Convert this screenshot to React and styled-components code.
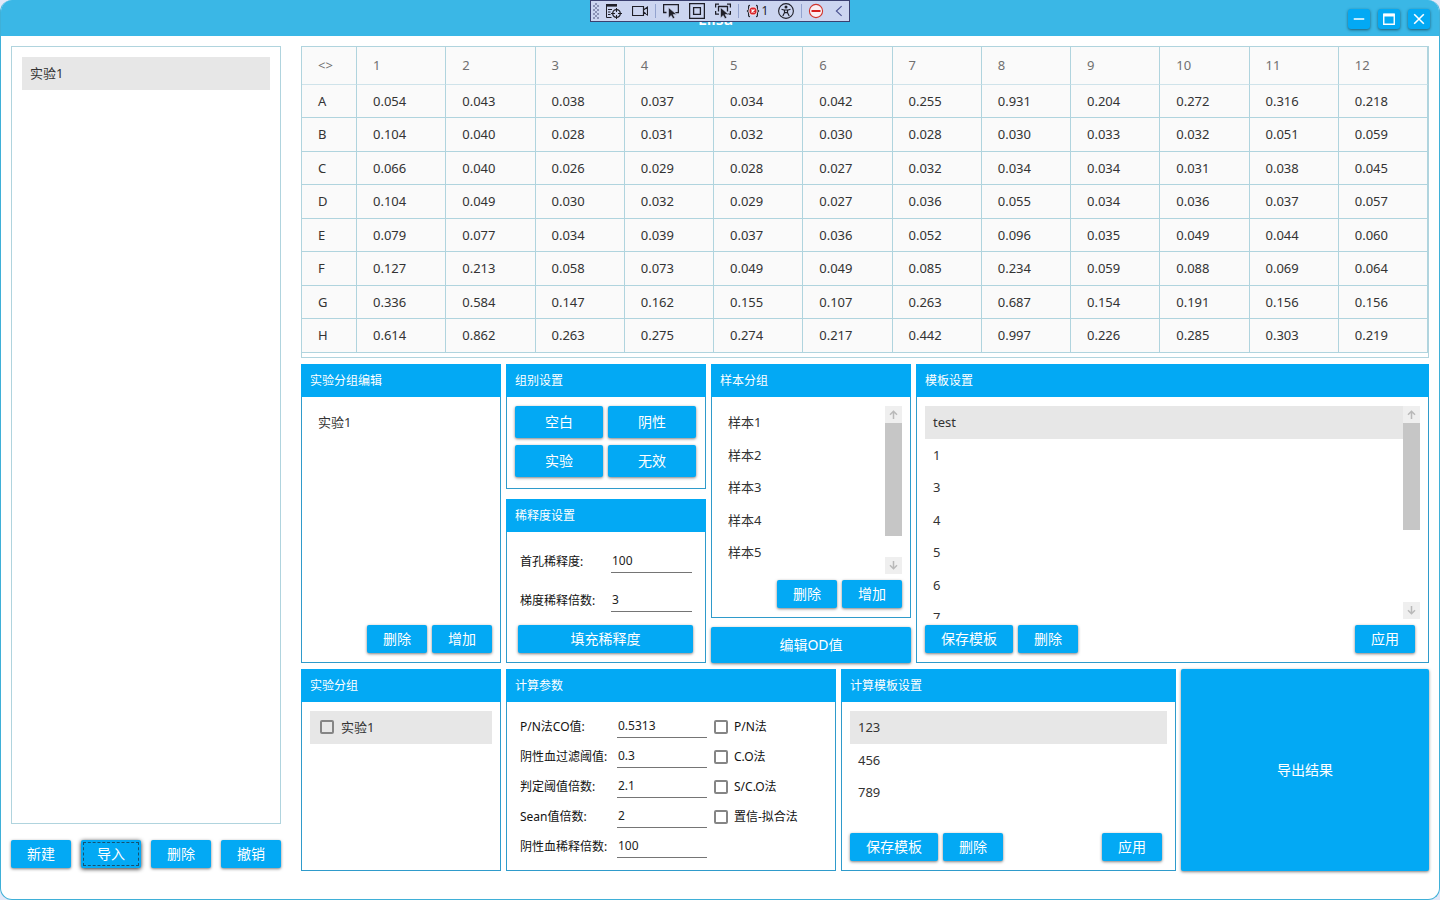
import React from "react";
import styled, { createGlobalStyle, css } from "styled-components";

const GlobalStyle = createGlobalStyle`
  *, *::before, *::after {
    box-sizing: border-box;
  }
  body {
    margin: 0;
    background: #e3e8f8;
    color: #333;
    font: 13px/20px "Noto Sans", "Noto Sans CJK SC", sans-serif;
  }
  button, input {
    font-family: inherit;
  }
  ul {
    list-style: none;
    margin: 0;
    padding: 0;
  }
`;

const AppWindow = styled.div`
  position: relative;
  display: flex;
  flex-direction: column;
  min-height: 100vh;
  background: #fff;
  border: 1px solid #3fb0d8;
  border-top: 0;
  border-radius: 12px;
  overflow: hidden;
`;

const TitleBar = styled.header`
  display: grid;
  grid-template-columns: 1fr auto 1fr;
  align-items: center;
  height: 36px;
  padding: 1px 9px 0 0;
  background: #3ab7e6;
`;

const Title = styled.h1`
  grid-column: 2;
  margin: 0;
  color: #fff;
  font-size: 16px;
  line-height: 20px;
  font-weight: 600;
`;

const WindowControls = styled.div`
  grid-column: 3;
  display: flex;
  justify-content: flex-end;
  gap: 8px;
`;

const raised = css`
  border: 0;
  border-radius: 2px;
  background: #03a9f4;
  color: #fff;
  box-shadow: 0 1px 3px rgba(0, 0, 0, 0.5);
  cursor: pointer;
`;

const ControlButton = styled.button`
  ${raised}
  display: flex;
  align-items: center;
  justify-content: center;
  width: 22px;
  height: 20px;
  padding: 0;
  border-radius: 3px;
`;

const Button = styled.button`
  ${raised}
  height: ${(p) => (p.$tall ? "36px" : "28px")};
  min-width: 60px;
  padding: 0 16px;
  font-size: 14px;
  line-height: 20px;
  white-space: nowrap;
  ${(p) =>
    p.$focused &&
    css`
      outline: 1px dashed #16506e;
      outline-offset: -3px;
      box-shadow: 0 1px 4px rgba(0, 0, 0, 0.85);
    `}
`;

const ExportButton = styled(Button)`
  height: auto;
`;

const DebugBar = styled.div`
  position: absolute;
  top: 0;
  left: 50%;
  transform: translateX(-50%);
  display: flex;
  align-items: center;
  height: 22px;
  width: 260px;
  background: #ccd5f0;
  border: 1px solid #3b4070;
`;

const Grip = styled.span`
  flex: none;
  width: 6px;
  height: 16px;
  margin: 0 2px;
  background: conic-gradient(#5f668f 90deg, transparent 0) 0 0 / 4px 4px,
    conic-gradient(#5f668f 90deg, transparent 0) 2px 2px / 4px 4px;
  opacity: 0.6;
`;

const DebugButton = styled.button`
  display: flex;
  align-items: center;
  justify-content: center;
  flex: none;
  gap: 2px;
  width: ${(p) => p.$width || 26}px;
  height: 20px;
  padding: 0;
  border: 0;
  background: none;
  color: #1f1f28;
  font-size: 12px;
  line-height: 16px;
`;

const DebugDivider = styled.span`
  flex: none;
  width: 1px;
  height: 14px;
  margin: 0 2px;
  background: #93a3cf;
`;

const Body = styled.div`
  flex: 1;
  display: grid;
  grid-template-columns: 270px minmax(0, 1fr);
  gap: 20px;
  padding: 10px 10px 28px;
`;

const Sidebar = styled.aside`
  display: flex;
  flex-direction: column;
  gap: 16px;
  padding-bottom: 3px;
`;

const ExperimentList = styled.ul`
  flex: 1;
  && {
    padding: 10px;
  }
  border: 1px solid #b0d4de;
`;

const Item = styled.li`
  display: flex;
  align-items: center;
  height: 33px;
  padding: 0 0 2px 8px;
  background: ${(p) => (p.$selected ? "#e7e7e7" : "transparent")};
  &:nth-child(odd):not(:first-child) {
    height: 32px;
  }
`;

const Spread = styled.div`
  display: flex;
  justify-content: space-between;
`;

const Main = styled.main`
  display: grid;
  grid-template-columns: minmax(0, 1fr);
  grid-template-rows: auto 1fr 202px;
  gap: 6px;
`;

const PlateFrame = styled.div`
  padding-bottom: 4px;
  border: 1px solid #b0d4de;
`;

const Plate = styled.table`
  width: 100%;
  table-layout: fixed;
  border-collapse: separate;
  border-spacing: 0;
  background: #fafafa;
  th,
  td {
    padding: 0 0 1px 16px;
    border-right: 1px solid #b0d4de;
    border-bottom: 1px solid #b0d4de;
    text-align: left;
    font-weight: 400;
  }
  thead th {
    height: 38px;
    color: #707070;
    border-bottom-color: #cfe3ea;
  }
  th:first-child {
    width: 55px;
  }
  tbody tr {
    height: 33px;
  }
  tbody tr:nth-child(even) {
    height: 34px;
  }
`;

const PanelRow = styled.div`
  display: grid;
  grid-template-columns: ${(p) => p.$columns};
  gap: 5px;
`;

const Stack = styled.div`
  display: flex;
  flex-direction: column;
  gap: ${(p) => p.$gap}px;
`;

const PanelBox = styled.section`
  display: flex;
  flex-direction: column;
  flex: ${(p) => (p.$grow ? "1" : "none")};
  border: 1px solid #2f9bcb;
`;

const PanelTitle = styled.h2`
  height: 33px;
  margin: -1px -1px 0;
  padding-left: 9px;
  background: #03a9f4;
  color: #fff;
  font-size: 12px;
  line-height: 34px;
  font-weight: 400;
`;

const PanelBody = styled.div`
  flex: 1;
  display: flex;
  flex-direction: column;
  gap: 6px;
  padding: 9px 8px;
`;

const ListArea = styled.div`
  flex: 1 1 0;
  min-height: 0;
  display: flex;
  overflow: hidden;
`;

const List = styled.ul`
  flex: 1;
`;

const Track = styled.div`
  display: flex;
  flex-direction: column;
  width: 17px;
`;

const TrackEnd = styled.div`
  display: flex;
  align-items: center;
  justify-content: center;
  flex: none;
  height: 17px;
  background: #efefef;
`;

const TrackMiddle = styled.div`
  flex: 1;
`;

const Thumb = styled.div`
  height: ${(p) => p.$size};
  background: #c6c6c6;
`;

const Actions = styled.div`
  display: flex;
  gap: 5px;
  justify-content: flex-end;
`;

const SplitActions = styled(Actions)`
  padding-right: 5px;
  ${Button}:last-child {
    margin-left: auto;
  }
`;

const KindGrid = styled.div`
  display: grid;
  grid-template-columns: 88px 88px;
  grid-auto-rows: 32px;
  gap: 7px 5px;
  ${Button} {
    height: 32px;
  }
`;

const DilutionForm = styled.div`
  display: grid;
  grid-template-columns: 91px 81px;
  gap: 15px 0;
  padding: 8px 5px 7px;
`;

const DilutionAction = styled.div`
  display: grid;
  padding: 0 4px 0 3px;
`;

const ParamForm = styled.div`
  display: grid;
  grid-template-columns: 97px 90px 1fr;
  grid-auto-rows: 30px;
  align-items: center;
  padding: 0 5px;
`;

const Label = styled.label`
  padding-top: 2px;
  color: #111;
  font-size: 12px;
  line-height: 22px;
  white-space: nowrap;
`;

const TextInput = styled.input`
  width: 100%;
  height: 24px;
  padding: 0 1px;
  border: 0;
  border-bottom: 1px solid #757575;
  border-radius: 0;
  background: none;
  color: #222;
  font-size: 12px;
  outline: none;
`;

const Check = styled.label`
  grid-column: 3;
  display: flex;
  align-items: center;
  gap: 6px;
  padding: 2px 0 0 7px;
  color: #111;
  font-size: 12px;
`;

const ItemCheck = styled.label`
  display: flex;
  align-items: center;
  gap: 7px;
  padding-left: 2px;
`;

const CheckBox = styled.input`
  appearance: none;
  width: 14px;
  height: 14px;
  margin: 0;
  border: 2px solid #858585;
  border-radius: 2px;
`;

const wells = [
  ["A", "0.054", "0.043", "0.038", "0.037", "0.034", "0.042", "0.255", "0.931", "0.204", "0.272", "0.316", "0.218"],
  ["B", "0.104", "0.040", "0.028", "0.031", "0.032", "0.030", "0.028", "0.030", "0.033", "0.032", "0.051", "0.059"],
  ["C", "0.066", "0.040", "0.026", "0.029", "0.028", "0.027", "0.032", "0.034", "0.034", "0.031", "0.038", "0.045"],
  ["D", "0.104", "0.049", "0.030", "0.032", "0.029", "0.027", "0.036", "0.055", "0.034", "0.036", "0.037", "0.057"],
  ["E", "0.079", "0.077", "0.034", "0.039", "0.037", "0.036", "0.052", "0.096", "0.035", "0.049", "0.044", "0.060"],
  ["F", "0.127", "0.213", "0.058", "0.073", "0.049", "0.049", "0.085", "0.234", "0.059", "0.088", "0.069", "0.064"],
  ["G", "0.336", "0.584", "0.147", "0.162", "0.155", "0.107", "0.263", "0.687", "0.154", "0.191", "0.156", "0.156"],
  ["H", "0.614", "0.862", "0.263", "0.275", "0.274", "0.217", "0.442", "0.997", "0.226", "0.285", "0.303", "0.219"],
];

const params = [
  { id: "pn", label: "P/N法CO值:", value: "0.5313", method: "P/N法" },
  { id: "filter", label: "阴性血过滤阈值:", value: "0.3", method: "C.O法" },
  { id: "judge", label: "判定阈值倍数:", value: "2.1", method: "S/C.O法" },
  { id: "sean", label: "Sean值倍数:", value: "2", method: "置信-拟合法" },
  { id: "negative", label: "阴性血稀释倍数:", value: "100" },
];

const Icon = ({ children, size = 16 }) => (
  <svg width={size} height={size} viewBox="0 0 16 16" fill="none" stroke="currentColor" aria-hidden="true">
    {children}
  </svg>
);

const Pointer = () => (
  <path d="M5.5 4.5v10.5l2.7-2.5 1.8 3.3 1.8-1-1.7-3.2h3.6z" fill="currentColor" stroke="#ccd5f0" strokeWidth="0.6" />
);

const DebugToolbar = () => (
  <DebugBar role="toolbar" aria-label="Debug">
    <Grip />
    <DebugButton aria-label="Live Visual Tree">
      <Icon>
        <path d="M0 1h11v2.6H0z" fill="currentColor" stroke="none" />
        <path d="M.5 3v11.5h5M2 6.5h4M2 9h2.5M2 11.5h2.5M10.5 5v4M10.5 12v4M5 10.5h4M12 10.5h4" />
        <circle cx="10.5" cy="10.5" r="3.8" strokeWidth="1.3" />
      </Icon>
    </DebugButton>
    <DebugButton aria-label="Record">
      <Icon>
        <path d="M.5 3.5h11v9H.5zM11.500 7l4-3v8l-4-3" strokeWidth="1.2" />
      </Icon>
    </DebugButton>
    <DebugDivider />
    <DebugButton aria-label="Select Element">
      <Icon>
        <path d="M3.5 9.5H.6V1.6h14.800v8h-3" strokeWidth="1.3" />
        <Pointer />
      </Icon>
    </DebugButton>
    <DebugButton aria-label="Layout Adorners">
      <Icon>
        <path d="M.6.6h14.800v14.800H.6zM4.600 4.600h6.800v6.800H4.600z" strokeWidth="1.3" />
      </Icon>
    </DebugButton>
    <DebugButton aria-label="Track Focused Element">
      <Icon>
        <path d="M.6 4.500V1.200H4M12 1.200h3.400v3.300M.6 8v3.200H4M12 11.200h3.400V8M3.500 8.500v-5h9v5" strokeWidth="1.3" />
        <Pointer />
      </Icon>
    </DebugButton>
    <DebugDivider />
    <DebugButton $width={32} aria-label="Binding Failures 1">
      <Icon size={14}>
        <path
          d="M4.500 1.500C2.500 1.500 3 3 3 5s-.5 3-2 3c1.500 0 2 1 2 3s-.5 3.500 1.500 3.500M11.500 1.500C13.500 1.500 13 3 13 5s.5 3 2 3c-1.500 0-2 1-2 3s.5 3.500-1.500 3.500"
          strokeWidth="1.3"
        />
        <circle cx="8" cy="8" r="4.600" fill="#d8232a" stroke="#fbeff2" />
        <path d="M6.300 6.300l3.400 3.400M9.700 6.300l-3.400 3.400" stroke="#fff" strokeWidth="1.5" />
      </Icon>
      1
    </DebugButton>
    <DebugButton aria-label="Accessibility Checker">
      <Icon>
        <circle cx="8" cy="8" r="7.400" strokeWidth="1.1" />
        <circle cx="8" cy="4" r="1.500" fill="currentColor" stroke="none" />
        <path d="M3.500 6.200l3 .9v2.600L4.800 13M12.500 6.200l-3 .9v2.600l1.700 3.300M6.500 7h3M6.500 9.700h3" strokeWidth="1.2" />
      </Icon>
    </DebugButton>
    <DebugDivider />
    <DebugButton $width={24} aria-label="Stop">
      <Icon>
        <circle cx="8" cy="8" r="6.600" fill="#fbeff2" stroke="#d0342c" strokeWidth="1.1" />
        <path d="M3.500 8h9" stroke="#d8201f" strokeWidth="2" />
      </Icon>
    </DebugButton>
    <DebugButton $width={21} aria-label="Collapse">
      <Icon size={14}>
        <path d="M11 2.500L5 8l6 5.500" stroke="#4a5190" strokeWidth="1.3" />
      </Icon>
    </DebugButton>
  </DebugBar>
);

const ScrollTrack = ({ thumb }) => (
  <Track aria-hidden="true">
    <TrackEnd>
      <svg width="9" height="9" viewBox="0 0 9 9" fill="none" stroke="#b9b9b9" strokeWidth="1.5">
        <path d="M4.500 9V1.200M1 4.700l3.500-3.500L8 4.700" />
      </svg>
    </TrackEnd>
    <TrackMiddle>
      <Thumb $size={thumb} />
    </TrackMiddle>
    <TrackEnd>
      <svg width="9" height="9" viewBox="0 0 9 9" fill="none" stroke="#b9b9b9" strokeWidth="1.5">
        <path d="M4.500 0v7.800M1 4.300l3.500 3.500L8 4.300" />
      </svg>
    </TrackEnd>
  </Track>
);

const Panel = ({ title, grow, children }) => (
  <PanelBox $grow={grow}>
    <PanelTitle>{title}</PanelTitle>
    <PanelBody>{children}</PanelBody>
  </PanelBox>
);

const ItemList = ({ items, selected, thumb }) => (
  <ListArea>
    <List>
      {items.map((item) => (
        <Item key={item} $selected={item === selected}>
          {item}
        </Item>
      ))}
    </List>
    {thumb && <ScrollTrack thumb={thumb} />}
  </ListArea>
);

const PlateTable = () => (
  <PlateFrame>
    <Plate>
      <thead>
        <tr>
          <th scope="col">&lt;&gt;</th>
          {wells[0].slice(1).map((_, i) => (
            <th key={i} scope="col">
              {i + 1}
            </th>
          ))}
        </tr>
      </thead>
      <tbody>
        {wells.map(([name, ...values]) => (
          <tr key={name}>
            <th scope="row">{name}</th>
            {values.map((value, i) => (
              <td key={i}>{value}</td>
            ))}
          </tr>
        ))}
      </tbody>
    </Plate>
  </PlateFrame>
);

const App = () => (
  <>
    <GlobalStyle />
    <AppWindow>
      <TitleBar>
        <Title>Elisa</Title>
        <WindowControls>
          <ControlButton aria-label="最小化">
            <Icon size={14}>
              <path d="M2 8h12" strokeWidth="1.8" />
            </Icon>
          </ControlButton>
          <ControlButton aria-label="最大化">
            <Icon size={14}>
              <path d="M2 2.500h12v11.500H2z" strokeWidth="1.6" />
              <path d="M2 3.500h12" strokeWidth="3" />
            </Icon>
          </ControlButton>
          <ControlButton aria-label="关闭">
            <Icon size={14}>
              <path d="M2.500 2.500l11 11M13.500 2.500l-11 11" strokeWidth="1.8" />
            </Icon>
          </ControlButton>
        </WindowControls>
      </TitleBar>
      <DebugToolbar />
      <Body>
        <Sidebar>
          <ExperimentList>
            <Item $selected>实验1</Item>
          </ExperimentList>
          <Spread>
            <Button>新建</Button>
            <Button $focused>导入</Button>
            <Button>删除</Button>
            <Button>撤销</Button>
          </Spread>
        </Sidebar>
        <Main>
          <PlateTable />
          <PanelRow $columns="200px 200px 200px minmax(0, 1fr)">
            <Panel title="实验分组编辑">
              <ItemList items={["实验1"]} />
              <Actions>
                <Button>删除</Button>
                <Button>增加</Button>
              </Actions>
            </Panel>
            <Stack $gap={10}>
              <Panel title="组别设置" grow>
                <KindGrid>
                  <Button>空白</Button>
                  <Button>阴性</Button>
                  <Button>实验</Button>
                  <Button>无效</Button>
                </KindGrid>
              </Panel>
              <Panel title="稀释度设置">
                <DilutionForm>
                  <Label htmlFor="first">首孔稀释度:</Label>
                  <TextInput id="first" defaultValue="100" />
                  <Label htmlFor="step">梯度稀释倍数:</Label>
                  <TextInput id="step" defaultValue="3" />
                </DilutionForm>
                <DilutionAction>
                  <Button>填充稀释度</Button>
                </DilutionAction>
              </Panel>
            </Stack>
            <Stack $gap={9}>
              <Panel title="样本分组" grow>
                <ItemList items={["样本1", "样本2", "样本3", "样本4", "样本5"]} thumb="84%" />
                <Actions>
                  <Button>删除</Button>
                  <Button>增加</Button>
                </Actions>
              </Panel>
              <Button $tall>编辑OD值</Button>
            </Stack>
            <Panel title="模板设置">
              <ItemList items={["test", "1", "3", "4", "5", "6", "7"]} selected="test" thumb="60%" />
              <SplitActions>
                <Button>保存模板</Button>
                <Button>删除</Button>
                <Button>应用</Button>
              </SplitActions>
            </Panel>
          </PanelRow>
          <PanelRow $columns="200px 330px 335px minmax(0, 1fr)">
            <Panel title="实验分组">
              <List>
                <Item $selected>
                  <ItemCheck>
                    <CheckBox type="checkbox" />
                    实验1
                  </ItemCheck>
                </Item>
              </List>
            </Panel>
            <Panel title="计算参数">
              <ParamForm>
                {params.map(({ id, label, value, method }) => (
                  <React.Fragment key={id}>
                    <Label htmlFor={id}>{label}</Label>
                    <TextInput id={id} defaultValue={value} />
                    {method ? (
                      <Check>
                        <CheckBox type="checkbox" />
                        {method}
                      </Check>
                    ) : (
                      <span />
                    )}
                  </React.Fragment>
                ))}
              </ParamForm>
            </Panel>
            <Panel title="计算模板设置">
              <ItemList items={["123", "456", "789"]} selected="123" />
              <SplitActions>
                <Button>保存模板</Button>
                <Button>删除</Button>
                <Button>应用</Button>
              </SplitActions>
            </Panel>
            <ExportButton>导出结果</ExportButton>
          </PanelRow>
        </Main>
      </Body>
    </AppWindow>
  </>
);

export default App;
